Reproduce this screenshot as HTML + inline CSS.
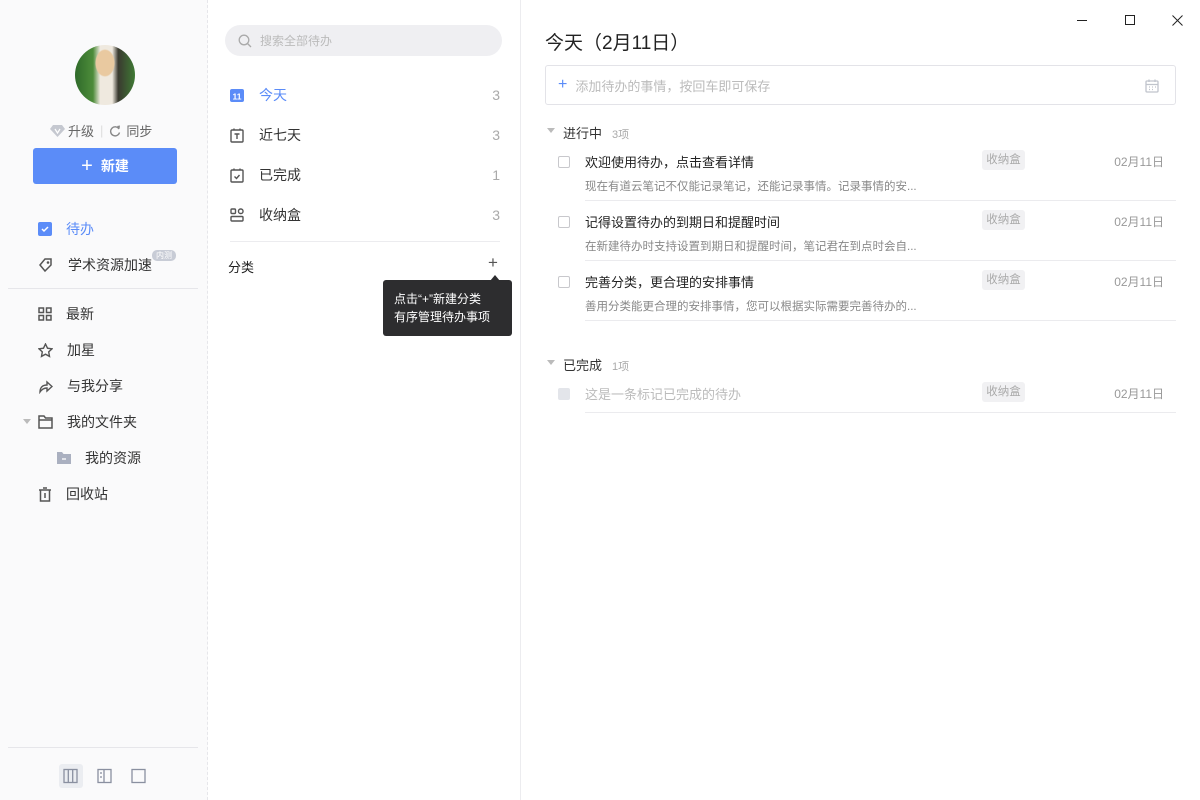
<!DOCTYPE html>
<html><head><meta charset="utf-8"><style>
*{margin:0;padding:0;box-sizing:border-box}
body{width:1200px;height:800px;overflow:hidden;background:#fff;font-family:"Liberation Sans","Noto Sans CJK SC",sans-serif;color:#333;position:relative;font-size:14px}
.a{position:absolute}
#left{left:0;top:0;width:208px;height:800px;background:#fafafb;border-right:1px dashed #e6e6ea}
#mid{left:208px;top:0;width:313px;height:800px;background:#fff;border-right:1px solid #ececef}
.nav{position:absolute;left:38px;font-size:14px;color:#333;display:flex;align-items:center}
.nav svg{margin-right:14px}
.mi{position:absolute;left:22px;width:270px;display:flex;align-items:center;font-size:14px;color:#333}
.mi svg{margin-right:15px}
.mi .n{margin-left:auto;color:#aaa}
.task{position:absolute;left:558px;width:618px}
.cb{position:absolute;left:0;top:4px;width:12px;height:12px;border:1px solid #c8c8cc;border-radius:2px;background:#fff}
.tt{position:absolute;left:27px;top:0;font-size:13px;color:#222}
.ts{position:absolute;left:27px;top:26px;font-size:11.5px;color:#888}
.tag{position:absolute;left:424px;top:-2px;width:43px;height:20px;background:#f1f1f3;border-radius:3px;font-size:11.5px;color:#aaa;text-align:center;line-height:20px}
.dt{position:absolute;right:12px;top:1px;font-size:12px;color:#999}
.ln{position:absolute;left:27px;right:0;height:1px;background:#ebebee}
</style></head><body>
<div id="left" class="a">
 <div class="a" style="left:75px;top:45px;width:60px;height:60px;border-radius:50%;background:radial-gradient(ellipse at 50% 30%,#e9c9a0 0 9px,transparent 10px),linear-gradient(90deg,#2f6a2a,#4d8c3a 30%,#efe9df 42%,#efe9df 62%,#3a3a30 72%,#3f7a34)"></div>
 <div class="a" style="left:50px;top:121px;font-size:13px;color:#666;display:flex;align-items:center">
  <svg width="15" height="12" viewBox="0 0 15 12"><path d="M3 0h9l3 4-7.5 8L0 4z" fill="#c5c8d0"/><path d="M5 4l2.5 4L10 4" stroke="#fff" fill="none" stroke-width="1.2"/></svg>
  <span style="margin-left:3px">升级</span><span style="margin:0 6px;color:#ddd">|</span>
  <svg width="12" height="12" viewBox="0 0 12 12"><path d="M10 4A4.5 4.5 0 1 0 10.5 7.5" stroke="#888" fill="none" stroke-width="1.4"/><path d="M8 1l2.5 3L11 0.5z" fill="#888"/></svg>
  <span style="margin-left:5px">同步</span></div>
 <div class="a" style="left:33px;top:148px;width:144px;height:36px;background:#5b8cf8;border-radius:3px;color:#fff;font-size:14px;font-weight:bold;display:flex;align-items:center;justify-content:center"><span style="font-size:20px;font-weight:normal;margin-right:8px;line-height:1">+</span>新建</div>
 <div class="nav" style="top:219px;color:#5b8cf8"><svg width="14" height="14"><rect width="14" height="14" rx="2" fill="#5b8cf8"/><path d="M4 7l2 2 4-4" stroke="#fff" stroke-width="1.5" fill="none"/></svg>待办</div>
 <div class="nav" style="top:255px"><svg width="16" height="16" viewBox="0 0 16 16"><path d="M2 8l5-6h6v6l-6 6z" stroke="#555" stroke-width="1.5" fill="none"/><circle cx="10" cy="5.5" r="1.3" fill="#555"/></svg>学术资源加速</div>
 <div class="a" style="left:152px;top:250px;width:24px;height:11px;background:#c8ccd6;border-radius:5px;color:#fff;font-size:8px;text-align:center;line-height:11px">内测</div>
 <div class="a" style="left:8px;top:288px;width:190px;height:1px;background:#e6e6ea"></div>
 <div class="nav" style="top:304px"><svg width="14" height="14" viewBox="0 0 14 14" fill="none" stroke="#555" stroke-width="1.5"><rect x="1" y="1" width="4.5" height="4.5"/><rect x="8.5" y="1" width="4.5" height="4.5"/><rect x="1" y="8.5" width="4.5" height="4.5"/><rect x="8.5" y="8.5" width="4.5" height="4.5"/></svg>最新</div>
 <div class="nav" style="top:340px"><svg width="15" height="15" viewBox="0 0 15 15"><path d="M7.5 1l2 4.2 4.5.6-3.3 3.1.8 4.5-4-2.2-4 2.2.8-4.5L1 5.8l4.5-.6z" stroke="#555" stroke-width="1.4" fill="none"/></svg>加星</div>
 <div class="nav" style="top:376px"><svg width="15" height="15" viewBox="0 0 15 15"><path d="M2 13c0-5 3-7 7-7V3l5 4.5-5 4.5V9c-3 0-5 1-7 4z" stroke="#555" stroke-width="1.4" fill="none"/></svg>与我分享</div>
 <div class="a" style="left:23px;top:419px;width:0;height:0;border-left:4px solid transparent;border-right:4px solid transparent;border-top:5px solid #bbb"></div>
 <div class="nav" style="top:412px"><svg width="15" height="14" viewBox="0 0 15 14" fill="none" stroke="#555" stroke-width="1.5"><path d="M1 1h5l1.5 2H14v10H1zM1 5h13"/></svg>我的文件夹</div>
 <div class="nav" style="top:448px;left:57px"><svg width="14" height="12" viewBox="0 0 14 12"><path d="M0 0h5l1.5 2H14v10H0z" fill="#aab0c0"/><path d="M5 7h4" stroke="#fff" stroke-width="1.3"/></svg>我的资源</div>
 <div class="nav" style="top:484px"><svg width="14" height="15" viewBox="0 0 14 15" fill="none" stroke="#555" stroke-width="1.5"><path d="M1 3h12M5 1h4M2.5 3v11h9V3M7 6v5"/></svg>回收站</div>
 <div class="a" style="left:8px;top:747px;width:190px;height:1px;background:#e6e6ea"></div>
 <div class="a" style="left:59px;top:764px;width:24px;height:24px;background:#ebedf1;border-radius:3px"></div>
 <svg class="a" style="left:63px;top:768px" width="90" height="16" viewBox="0 0 90 16" fill="none" stroke="#8a90a0" stroke-width="1.3"><rect x="1" y="1.5" width="13" height="13"/><path d="M5.3 1.5v13M9.7 1.5v13"/><rect x="35" y="1.5" width="13" height="13"/><path d="M41 1.5v13M38 4v2M38 8v2"/><rect x="69" y="1.5" width="13" height="13"/></svg>
</div>
<div id="mid" class="a">
 <div class="a" style="left:17px;top:25px;width:277px;height:31px;border-radius:16px;background:#efeff2;display:flex;align-items:center;padding-left:13px;color:#bbb;font-size:12px"><svg width="14" height="14" viewBox="0 0 14 14" fill="none" stroke="#aaa" stroke-width="1.3" style="margin-right:8px"><circle cx="6" cy="6" r="4.8"/><path d="M9.5 9.5L13 13"/></svg>搜索全部待办</div>
 <div class="mi" style="top:85px;color:#5b8cf8"><svg width="14" height="14"><rect y="1" width="14" height="13" rx="2" fill="#5b8cf8"/><text x="7" y="11.5" font-size="8.5" font-weight="bold" fill="#fff" text-anchor="middle" font-family="Liberation Sans">11</text></svg>今天<span class="n">3</span></div>
 <div class="mi" style="top:125px"><svg width="14" height="15" viewBox="0 0 14 15" fill="none" stroke="#555" stroke-width="1.4"><rect x="1" y="2" width="12" height="12" rx="1"/><path d="M4 0.5v2M10 0.5v2M4.5 6h5M7 6v5"/></svg>近七天<span class="n">3</span></div>
 <div class="mi" style="top:165px"><svg width="14" height="15" viewBox="0 0 14 15" fill="none" stroke="#555" stroke-width="1.4"><rect x="1" y="2" width="12" height="12" rx="1"/><path d="M4 0.5v2M10 0.5v2M4.5 8.5l2 2 3-3.5"/></svg>已完成<span class="n">1</span></div>
 <div class="mi" style="top:205px"><svg width="14" height="14" viewBox="0 0 14 14" fill="none" stroke="#555" stroke-width="1.4"><rect x="1" y="1" width="4.5" height="4.5" rx="1"/><rect x="8.5" y="1" width="4.5" height="4.5" rx="2"/><rect x="1" y="8.5" width="12" height="4.5" rx="1"/></svg>收纳盒<span class="n">3</span></div>
 <div class="a" style="left:22px;top:241px;width:270px;height:1px;background:#ececef"></div>
 <div class="a" style="left:20px;top:257px;font-size:13px;color:#222">分类</div>
 <div class="a" style="left:280px;top:253px;font-size:17px;color:#555">+</div>
 <div class="a" style="left:282px;top:275px;width:0;height:0;border-left:5px solid transparent;border-right:5px solid transparent;border-bottom:6px solid #2d2d2f"></div>
 <div class="a" style="left:175px;top:280px;width:129px;height:56px;background:#2d2d2f;border-radius:3px;color:#fff;font-size:12px;line-height:18px;padding:10px 0 0 11px">点击“+”新建分类<br>有序管理待办事项</div>
</div>
<div class="a" style="left:1077px;top:20px;width:10px;height:1px;background:#222"></div>
<div class="a" style="left:1125px;top:15px;width:10px;height:10px;border:1px solid #222"></div>
<svg class="a" style="left:1172px;top:15px" width="11" height="11"><path d="M0.5 0.5l10 10M10.5 0.5l-10 10" stroke="#222"/></svg>
<div class="a" style="left:545px;top:28px;font-size:19px;color:#222">今天（2月11日）</div>
<div class="a" style="left:545px;top:65px;width:631px;height:40px;border:1px solid #e3e3e8;border-radius:3px;display:flex;align-items:center;padding-left:12px;font-size:13px;color:#bbb"><span style="color:#5b8cf8;font-size:16px;margin-right:8px">+</span>添加待办的事情，按回车即可保存
<svg style="position:absolute;right:16px;top:13px" width="14" height="14" viewBox="0 0 14 14" fill="none" stroke="#c0c4cc" stroke-width="1.3"><rect x="1" y="2" width="12" height="11" rx="1"/><path d="M1 5.5h12M4 0.5v2.5M10 0.5v2.5M4 8h1M7 8h1M10 8h1M4 10.5h1M7 10.5h1"/></svg></div>
<div class="a" style="left:547px;top:128px;border-left:4px solid transparent;border-right:4px solid transparent;border-top:5px solid #bbb"></div>
<div class="a" style="left:563px;top:123px;font-size:13px;color:#333">进行中<span style="color:#aaa;font-size:11px;margin-left:10px">3项</span></div>
<div class="task" style="top:152px"><div class="cb"></div><div class="tt">欢迎使用待办，点击查看详情</div><div class="tag">收纳盒</div><div class="dt">02月11日</div><div class="ts">现在有道云笔记不仅能记录笔记，还能记录事情。记录事情的安...</div><div class="ln" style="top:48px"></div></div>
<div class="task" style="top:212px"><div class="cb"></div><div class="tt">记得设置待办的到期日和提醒时间</div><div class="tag">收纳盒</div><div class="dt">02月11日</div><div class="ts">在新建待办时支持设置到期日和提醒时间，笔记君在到点时会自...</div><div class="ln" style="top:48px"></div></div>
<div class="task" style="top:272px"><div class="cb"></div><div class="tt">完善分类，更合理的安排事情</div><div class="tag">收纳盒</div><div class="dt">02月11日</div><div class="ts">善用分类能更合理的安排事情，您可以根据实际需要完善待办的...</div><div class="ln" style="top:48px"></div></div>
<div class="a" style="left:547px;top:360px;border-left:4px solid transparent;border-right:4px solid transparent;border-top:5px solid #bbb"></div>
<div class="a" style="left:563px;top:355px;font-size:13px;color:#333">已完成<span style="color:#aaa;font-size:11px;margin-left:10px">1项</span></div>
<div class="task" style="top:384px"><div class="cb" style="background:#e3e5ea;border-color:#e3e5ea"></div><div class="tt" style="color:#bbb">这是一条标记已完成的待办</div><div class="tag">收纳盒</div><div class="dt">02月11日</div><div class="ln" style="top:28px"></div></div>
</body></html>
